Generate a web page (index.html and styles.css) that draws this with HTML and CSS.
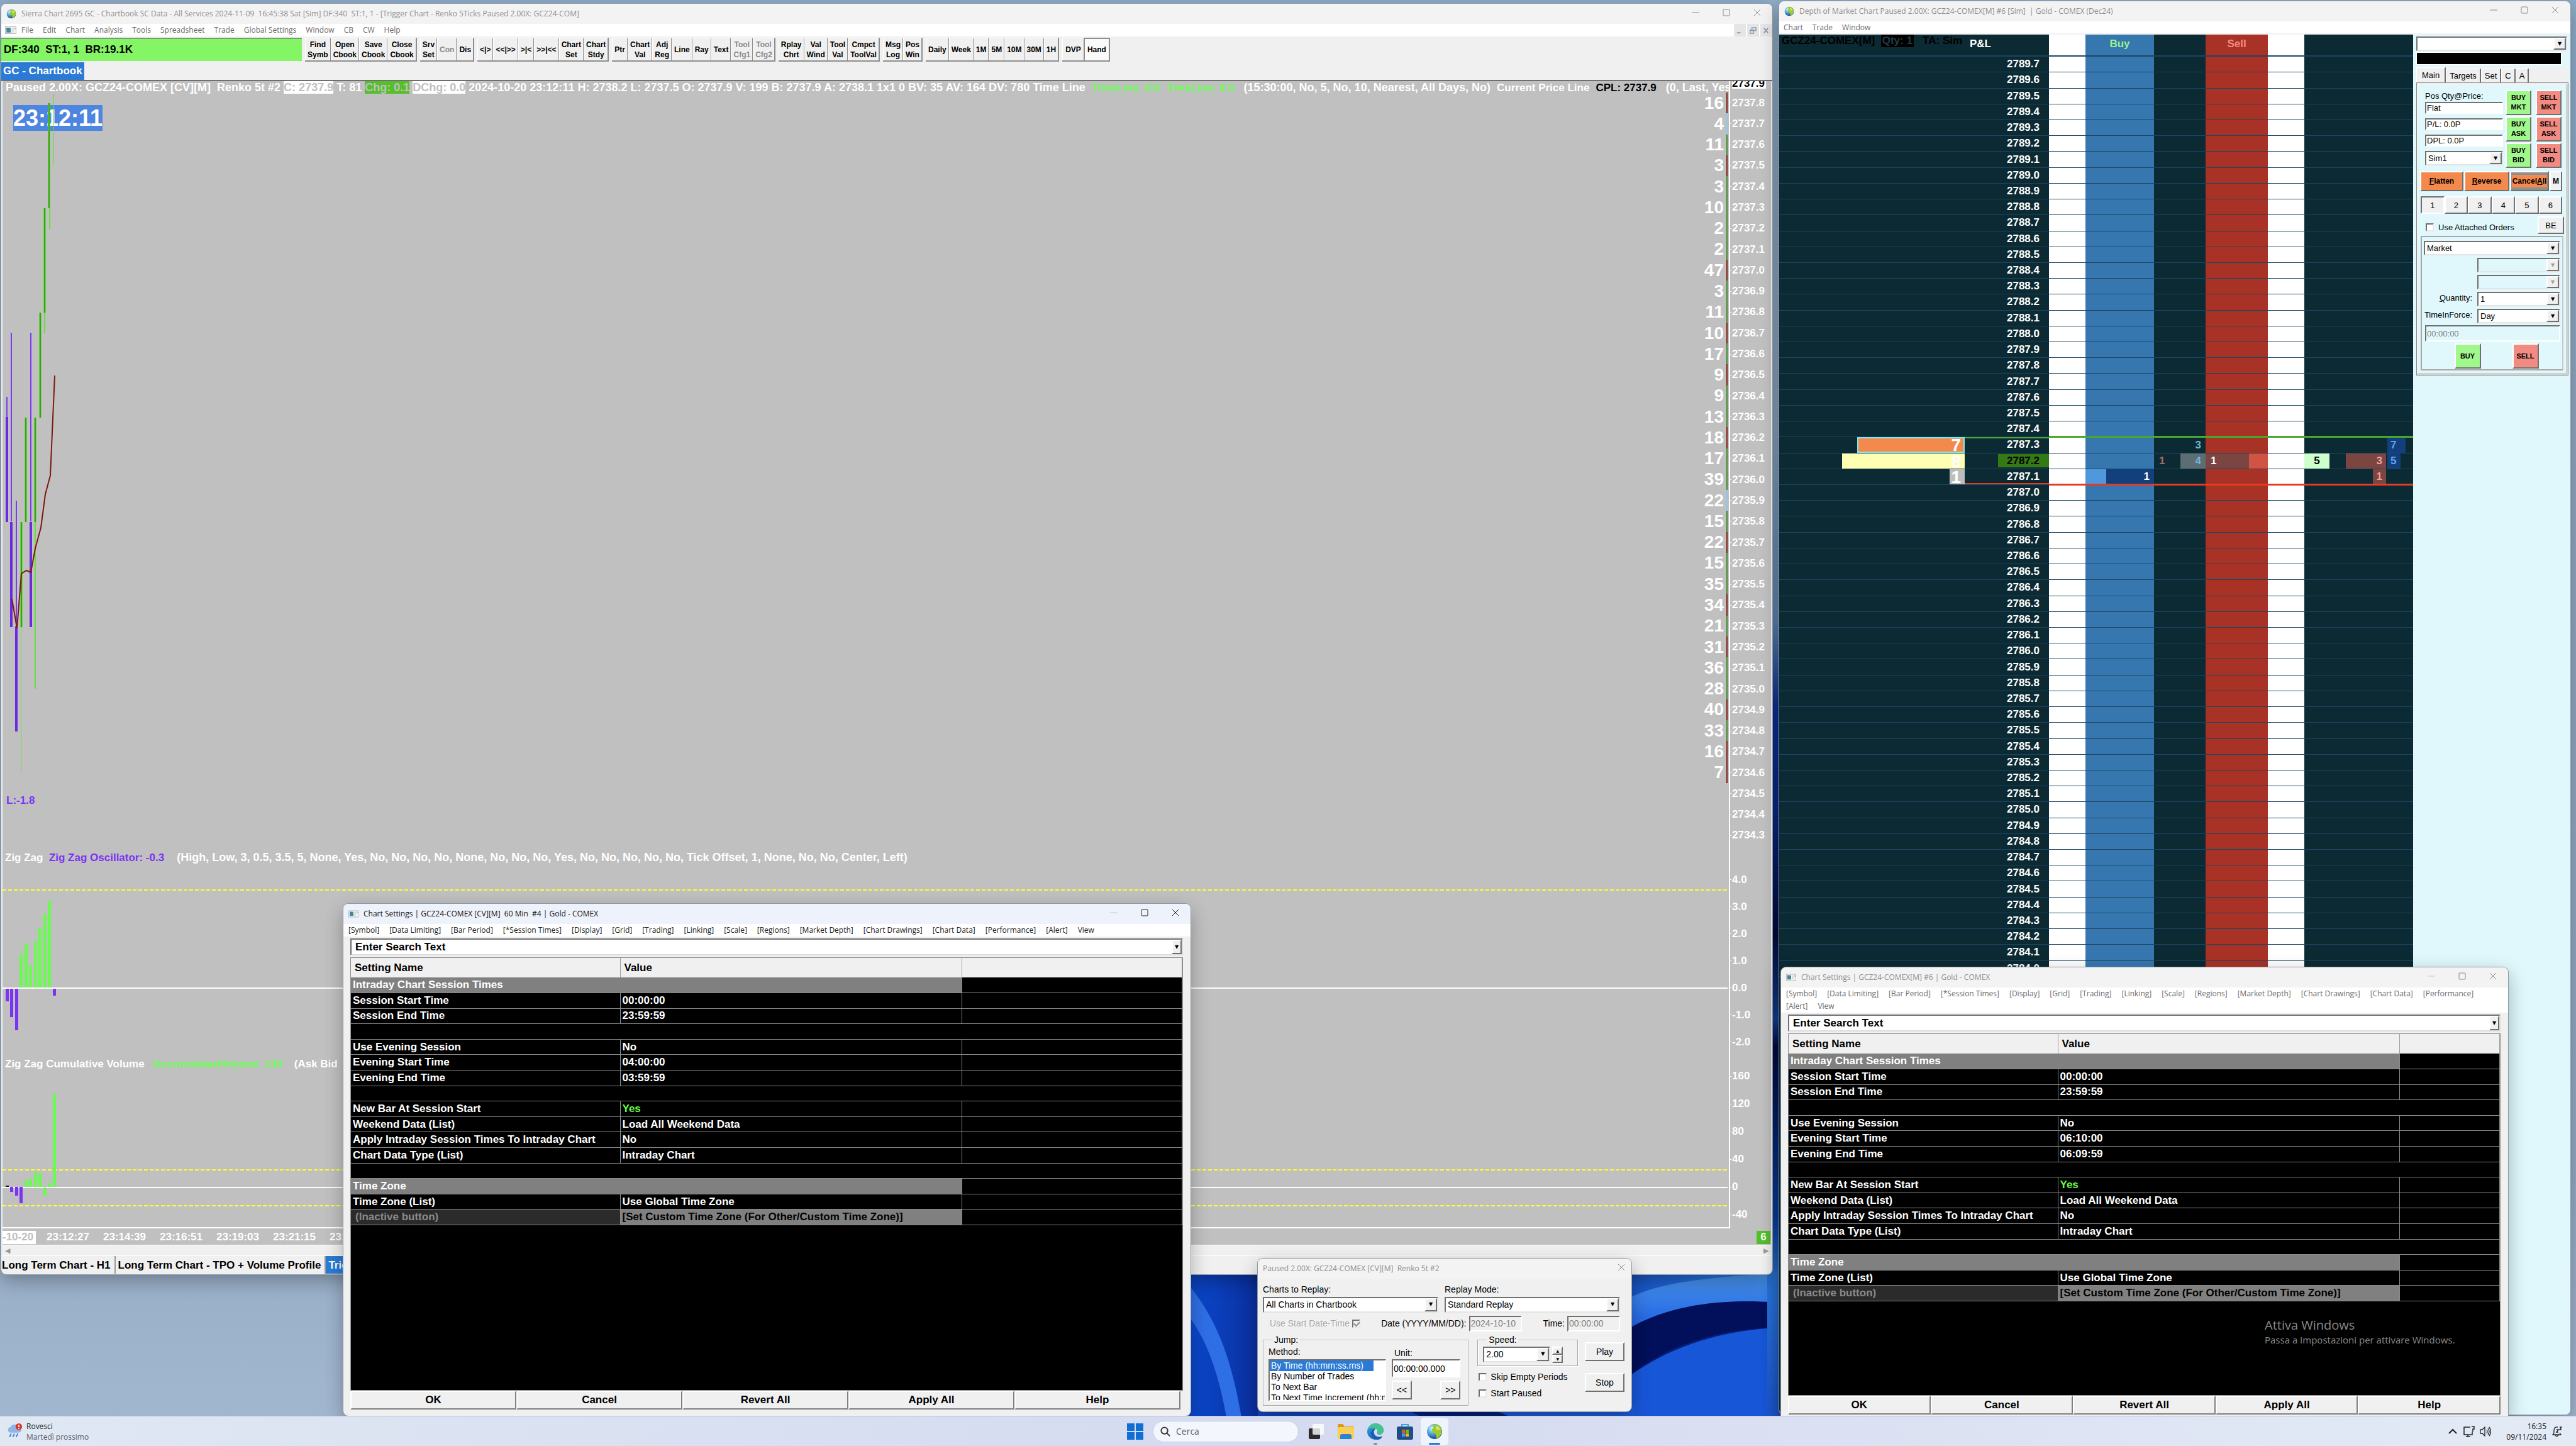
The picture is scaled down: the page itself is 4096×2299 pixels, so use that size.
FILE: index.html
```html
<!DOCTYPE html>
<html lang="it">
<head>
<meta charset="utf-8">
<title>Sierra Chart</title>
<link rel="stylesheet" href="styles.css">
</head>
<body>
<svg class="defs" aria-hidden="true">
  <defs>
    <radialGradient id="sea" cx="35%" cy="30%" r="75%"><stop offset="0" stop-color="#e8f6ff"/><stop offset=".4" stop-color="#5fb0e8"/><stop offset="1" stop-color="#123c86"/></radialGradient>
    <linearGradient id="edgeg" x1="0" y1="0" x2="1" y2="1"><stop offset="0" stop-color="#2aa7e0"/><stop offset=".5" stop-color="#1b77c9"/><stop offset="1" stop-color="#0d4f9e"/></linearGradient>
    <symbol id="globe" viewBox="0 0 24 24">
      <circle cx="12" cy="12" r="11" fill="url(#sea)"/>
      <path d="M9 3c4-2 9-1 12 3 2 4 2 8 0 11-2 3-4 5-6 5-1-3 0-5-2-7-3-1-5-2-5-5 0-2 2-3 3-4-1-1-2-2-2-3z" fill="#9ccc2e"/>
      <path d="M14 4c3 0 5 2 6 5l-3 1-3-2z" fill="#d7ea5a"/>
    </symbol>
    <symbol id="sheet" viewBox="0 0 24 16">
      <rect x=".5" y=".5" width="23" height="15" fill="#f4f4f4" stroke="#9aa0a6"/>
      <rect x="3" y="3" width="9" height="10" fill="#3f8f86"/><rect x="3" y="3" width="5" height="5" fill="#4d74b8"/>
      <rect x="14" y="3" width="4" height="10" fill="#d9dcdf"/><rect x="20" y="3" width="2" height="3" fill="#7fb58a"/>
    </symbol>
    <symbol id="min" viewBox="0 0 12 12"><path d="M0 6h12" stroke="currentColor" fill="none"/></symbol>
    <symbol id="max" viewBox="0 0 12 12"><rect x="1" y="1" width="10" height="10" rx="1" stroke="currentColor" fill="none"/></symbol>
    <symbol id="close" viewBox="0 0 12 12"><path d="M1 1l10 10M11 1L1 11" stroke="currentColor" fill="none"/></symbol>
  </defs>
</svg>

<main class="desktop">
  <svg class="bloom" viewBox="0 0 940 230" preserveAspectRatio="none" aria-hidden="true">
    <defs>
      <linearGradient id="b1" x1="0" x2="1"><stop offset="0" stop-color="#0b49cf"/><stop offset="1" stop-color="#0a2f9e"/></linearGradient>
      <linearGradient id="b2" x1="0" x2="0" y1="0" y2="1"><stop offset="0" stop-color="#4a95ec"/><stop offset="1" stop-color="#1a5be0"/></linearGradient>
      <linearGradient id="b3" x1="0" x2="1"><stop offset="0" stop-color="#0b329e"/><stop offset=".3" stop-color="#1550c4"/><stop offset="1" stop-color="#2f80e0"/></linearGradient>
    </defs>
    <rect width="940" height="230" fill="#04207c"/>
    <path d="M0 0h110v230H0z" fill="url(#b1)"/>
    <path d="M0 20C50 80 70 150 84 230H60C46 150 24 100 0 70z" fill="#2f6fe6"/>
    <path d="M560 0h380v60C860 40 760 40 702 60z" fill="url(#b3)"/>
    <path d="M702 40C760 10 860 8 940 0v60c-80-4-170 2-238 40z" fill="url(#b2)"/>
    <path d="M702 88c70-40 158-46 238-40v40c-80 0-170 20-238 76z" fill="#020f5a"/>
    <path d="M702 164c68-50 158-74 238-76v142H702z" fill="#1856d8"/>
    <path d="M110 214h230l30 16H110z" fill="#1246c0"/>
    <path d="M450 214c30 4 50 8 60 16h200v-16z" fill="#1b5bdc"/>
  </svg>
  <div class="gutter"></div>

  <!-- Main application window -->
  <section class="window app">
    <header class="titlebar">
      <svg class="ic16"><use href="#globe"/></svg>
      <h1>Sierra Chart 2695 GC - Chartbook SC Data - All Services 2024-11-09&nbsp; 16:45:38 Sat [Sim] DF:340&nbsp; ST:1, 1 - [Trigger Chart - Renko 5Ticks Paused 2.00X: GCZ24-COM]</h1>
      <div class="controls">
        <button aria-label="Minimize"><svg><use href="#min"/></svg></button>
        <button aria-label="Maximize"><svg><use href="#max"/></svg></button>
        <button aria-label="Close"><svg><use href="#close"/></svg></button>
      </div>
    </header>
    <nav class="menubar">
      <svg class="ic16 doc"><use href="#sheet"/></svg>
      <a href="#">File</a><a href="#">Edit</a><a href="#">Chart</a><a href="#">Analysis</a><a href="#">Tools</a><a href="#">Spreadsheet</a><a href="#">Trade</a><a href="#">Global Settings</a><a href="#">Window</a><a href="#">CB</a><a href="#">CW</a><a href="#">Help</a>
      <div class="mdi">
        <button aria-label="Minimize chart"><svg viewBox="0 0 12 12"><path d="M1 10h6" stroke="currentColor" stroke-width="2"/></svg></button>
        <button aria-label="Restore chart"><svg viewBox="0 0 12 12"><path d="M4 4V1h7v5H8M1 5h6v6H1zM1 6h6" stroke="currentColor" stroke-width="1.5" fill="none"/></svg></button>
        <button aria-label="Close chart"><svg viewBox="0 0 12 12"><path d="M2 2l7 8M9 2l-7 8" stroke="currentColor" stroke-width="2"/></svg></button>
      </div>
    </nav>
    <div class="toolbar">
      <div class="status">DF:340&nbsp; ST:1, 1&nbsp; BR:19.1K</div>
      <div class="tools"><button>Find<br>Symb</button><button>Open<br>Cbook</button><button>Save<br>Cbook</button><button>Close<br>Cbook</button></div>
      <div class="tools"><button>Srv<br>Set</button><button disabled>Con</button><button>Dis</button></div>
      <div class="tools"><button>&lt;|&gt;</button><button>&lt;&lt;|&gt;&gt;</button><button>&gt;|&lt;</button><button>&gt;&gt;|&lt;&lt;</button><button>Chart<br>Set</button><button>Chart<br>Stdy</button></div>
      <div class="tools"><button>Ptr</button><button>Chart<br>Val</button><button>Adj<br>Reg</button><button>Line</button><button>Ray</button><button>Text</button><button disabled>Tool<br>Cfg1</button><button disabled>Tool<br>Cfg2</button></div>
      <div class="tools"><button>Rplay<br>Chrt</button><button>Val<br>Wind</button><button>Tool<br>Val</button><button>Cmpct<br>ToolVal</button></div>
      <div class="tools"><button>Msg<br>Log</button><button>Pos<br>Win</button></div>
      <div class="tools"><button>Daily</button><button>Week</button><button>1M</button><button>5M</button><button>10M</button><button>30M</button><button>1H</button></div>
      <div class="tools roomy"><button>DVP</button><button class="pressed">Hand</button></div>
    </div>
    <div class="books"><button class="book">GC - Chartbook</button></div>

    <div class="chart">
      <div class="plot">
        <p class="legend">Paused 2.00X: GCZ24-COMEX [CV][M]  Renko 5t #2 <span class="inv">C: 2737.9</span> T: 81 <span class="inv up">Chg: 0.1</span> <span class="inv">DChg: 0.0</span> 2024-10-20 23:12:11 H: 2738.2 L: 2737.5 O: 2737.9 V: 199 B: 2737.9 A: 2738.1 1x1 0 BV: 35 AV: 164 DV: 780 Time Line  <span class="lime">TimeLine: 0.0</span>  <span class="lime">TimeLine: 0.0</span>   (15:30:00, No, 5, No, 10, Nearest, All Days, No)  <span class="name">Current Price Line</span>  <span class="blk">CPL: 2737.9</span>   (0, Last, Yes</p>
        <ol class="counts" id="counts"></ol>
        <p class="clock">23:12:11</p>
        <p class="study low">L:-1.8</p>
        <p class="study osc">Zig Zag  <span class="violet">Zig Zag Oscillator: -0.3</span><span class="inputs">    (High, Low, 3, 0.5, 3.5, 5, None, Yes, No, No, No, No, None, No, No, No, Yes, No, No, No, No, No, Tick Offset, 1, None, No, No, Center, Left)</span></p>
        <p class="study cum">Zig Zag Cumulative Volume   <span class="lime">AccumulatedVolume: 134</span>    (Ask Bid</p>
        <svg class="drawing" aria-hidden="true">
          <g transform="translate(-4 -129)">
            <g stroke="#ffff33" stroke-width="2" stroke-dasharray="6 3">
              <path d="M4 1415H2748M4 1860H2748M4 1917H2748"/>
            </g>
            <path d="M4 1571H2747M4 1888H2747" stroke="#fff" stroke-width="2"/>
            <g fill="#7b33f5">
              <path d="M9 1572h5v20h-5zM16 1572h5v45h-5zM24 1572h5v66h-5zM84 1572h5v11h-5z"/>
              <path d="M16 1887h5v8h-5zM24 1887h5v14h-5zM31 1887h5v26h-5z"/>
            </g>
            <path d="M9 1885h5v2h-5z" fill="#111"/>
            <path fill="#6bfa52" d="M31 1570h5v-53h-5zM39 1570h5v-70h-5zM46 1570h5v-35h-5zM54 1570h5v-74h-5zM61 1570h5v-95h-5zM69 1570h5v-117h-5zM76 1570h5v-138h-5zM39 1887h5v-11h-5zM46 1887h5v-13h-5zM54 1887h5v-24h-5zM61 1887h5v-21h-5zM69 1888h5v13h-5zM76 1887h5v-6h-5zM84 1887h5v-148h-5z"/>
            <g fill="#7b3cf0">
              <path d="M10 631h2v40h-2zM17 529h2v300h-2zM25 796h2v200h-2zM48 529h2v300h-2z"/>
              <path d="M9 663h4v167H9zM16 830h4v167h-4zM24 996h4v167h-4zM47 830h4v167h-4z" fill="#6a2be0"/>
            </g>
            <g fill="#68dd3f">
              <path d="M33 990h1v239h-1zM55 830h2v265h-2zM70 496h2v33h-2zM78 330h2v34h-2zM85 149h1v115h-1z"/>
              <path d="M32 830h4v167h-4zM39 664h4v166h-4zM54 664h4v166h-4zM62 497h4v167h-4zM69 331h4v166h-4zM76 164h4v167h-4z"/>
              <path d="M33 830h2v167h-2zM40 664h2v166h-2zM55 664h2v166h-2zM63 497h2v167h-2zM70 331h2v166h-2zM77 164h2v167h-2z" fill="#3f9a24"/>
            </g>
            <path d="M19 952L27 999L34 912L42 907L49 910L56 872L65 839L72 786L80 756L87 597" fill="none" stroke="#7d190f" stroke-width="2"/>
          </g>
        </svg>
      </div>
      <div class="axis">
        <div class="last">2737.9</div>
        <ol class="scale prices" id="prices"></ol>
        <ol class="scale oscs"><li>4.0</li><li>3.0</li><li>2.0</li><li>1.0</li><li>0.0</li><li>-1.0</li><li>-2.0</li></ol>
        <ol class="scale vols"><li>160</li><li>120</li><li>80</li><li>40</li><li>0</li><li>-40</li></ol>
      </div>
      <div class="times">
        <span class="day">-10-20</span>
        <ol><li>23:12:27</li><li>23:14:39</li><li>23:16:51</li><li>23:19:03</li><li>23:21:15</li><li>23:23:27</li></ol>
        <span class="badge">6</span>
      </div>
    </div>
    <div class="hscroll"><span>◀</span><span>▶</span></div>
    <nav class="charttabs"><a href="#">Long Term Chart - H1</a><a href="#">Long Term Chart - TPO + Volume Profile</a><a href="#" class="on">Trigger Chart - Renko 5Ticks</a></nav>
  </section>

  <!-- Depth of market window -->
  <section class="window dom">
    <header class="titlebar">
      <svg class="ic16"><use href="#globe"/></svg>
      <h1>Depth of Market Chart Paused 2.00X: GCZ24-COMEX[M] #6 [Sim]&nbsp; | Gold - COMEX (Dec24)</h1>
      <div class="controls">
        <button aria-label="Minimize"><svg><use href="#min"/></svg></button>
        <button aria-label="Maximize"><svg><use href="#max"/></svg></button>
        <button aria-label="Close"><svg><use href="#close"/></svg></button>
      </div>
    </header>
    <nav class="menubar"><a href="#">Chart</a><a href="#">Trade</a><a href="#">Window</a></nav>
    <div class="dombody">
      <div class="ladderwrap">
        <p class="symbol">GCZ24-COMEX[M]  <span>Qty: 1</span>   TA: Sim</p>
        <table class="ladder">
          <colgroup><col class="c-price"><col class="c-white"><col class="c-buy"><col class="c-mid"><col class="c-sell"><col class="c-white"><col></colgroup>
          <thead><tr><th class="pl">P&amp;L</th><th></th><th class="buy">Buy</th><th></th><th class="sell">Sell</th><th></th><th></th></tr></thead>
          <tbody id="ladder"></tbody>
        </table>
      </div>
      <form class="panel">
        <div class="combo wide"><select aria-label="Symbol"><option></option></select></div>
        <div class="blackbar"></div>
        <div class="ptabs"><button type="button" class="on">Main</button><button type="button">Targets</button><button type="button">Set</button><button type="button">C</button><button type="button">A</button></div>
        <div class="page">
          <div class="quick">
            <div class="pos">
              <label for="pos">Pos Qty@Price:</label>
              <input id="pos" value="Flat">
              <input aria-label="Profit loss" value="P/L: 0.0P">
              <input aria-label="Daily profit loss" value="DPL: 0.0P">
              <div class="combo"><select aria-label="Account"><option>Sim1</option></select></div>
            </div>
            <div class="trade"><button type="button" class="g">BUY<br>MKT</button><button type="button" class="r">SELL<br>MKT</button><button type="button" class="g">BUY<br>ASK</button><button type="button" class="r">SELL<br>ASK</button><button type="button" class="g">BUY<br>BID</button><button type="button" class="r">SELL<br>BID</button></div>
          </div>
          <div class="acts"><button type="button" class="o"><u>F</u>latten</button><button type="button" class="o"><u>R</u>everse</button><button type="button" class="cancel"><span>Cancel<u>A</u>ll</span></button><button type="button" class="m">M</button></div>
          <div class="nums"><button type="button" class="on">1</button><button type="button">2</button><button type="button">3</button><button type="button">4</button><button type="button">5</button><button type="button">6</button></div>
          <div class="attach"><label><input type="checkbox">Use Attached Orders</label><button type="button">BE</button></div>
          <div class="order">
            <div class="combo span"><select aria-label="Order type"><option>Market</option></select></div>
            <i></i><div class="combo off"><select aria-label="Price 1" disabled><option></option></select></div>
            <i></i><div class="combo off"><select aria-label="Price 2" disabled><option></option></select></div>
            <label for="qty"><u>Q</u>uantity:</label><div class="combo"><select id="qty"><option>1</option></select></div>
            <label for="tif">TimeInForce:</label><div class="combo"><select id="tif"><option>Day</option></select></div>
            <input class="span dis" aria-label="Expiry time" value="00:00:00" disabled>
            <div class="span send"><button type="button" class="g">BUY</button><button type="button" class="r">SELL</button></div>
          </div>
        </div>
      </form>
    </div>
  </section>

  <!-- Chart settings #4 -->
  <section class="window settings first active">
    <header class="titlebar">
      <svg class="ic16 doc"><use href="#sheet"/></svg>
      <h1>Chart Settings | GCZ24-COMEX [CV][M]&nbsp; 60 Min&nbsp; #4 | Gold - COMEX</h1>
      <div class="controls">
        <button aria-label="Minimize" disabled><svg><use href="#min"/></svg></button>
        <button aria-label="Maximize"><svg><use href="#max"/></svg></button>
        <button aria-label="Close"><svg><use href="#close"/></svg></button>
      </div>
    </header>
    <nav class="menubar"><a href="#">[Symbol]</a><a href="#">[Data Limiting]</a><a href="#">[Bar Period]</a><a href="#">[*Session Times]</a><a href="#">[Display]</a><a href="#">[Grid]</a><a href="#">[Trading]</a><a href="#">[Linking]</a><a href="#">[Scale]</a><a href="#">[Regions]</a><a href="#">[Market Depth]</a><a href="#">[Chart Drawings]</a><a href="#">[Chart Data]</a><a href="#">[Performance]</a><a href="#">[Alert]</a><a href="#">View</a></nav>
    <div class="setbody">
      <div class="search"><input aria-label="Search settings" value="Enter Search Text"><button aria-label="Open list">▼</button></div>
      <div class="sheet">
        <table class="props">
          <colgroup><col class="p1"><col class="p2"><col></colgroup>
          <thead><tr><th>Setting Name</th><th>Value</th><th></th></tr></thead>
          <tbody>
            <tr><td colspan="2" class="group">Intraday Chart Session Times</td><td></td></tr>
            <tr><td>Session Start Time</td><td>00:00:00</td><td></td></tr>
            <tr><td>Session End Time</td><td>23:59:59</td><td></td></tr>
            <tr><td colspan="3"></td></tr>
            <tr><td>Use Evening Session</td><td>No</td><td></td></tr>
            <tr><td>Evening Start Time</td><td>04:00:00</td><td></td></tr>
            <tr><td>Evening End Time</td><td>03:59:59</td><td></td></tr>
            <tr><td colspan="3"></td></tr>
            <tr><td>New Bar At Session Start</td><td class="yes">Yes</td><td></td></tr>
            <tr><td>Weekend Data (List)</td><td>Load All Weekend Data</td><td></td></tr>
            <tr><td>Apply Intraday Session Times To Intraday Chart</td><td>No</td><td></td></tr>
            <tr><td>Chart Data Type (List)</td><td>Intraday Chart</td><td></td></tr>
            <tr><td colspan="3"></td></tr>
            <tr><td colspan="2" class="group">Time Zone</td><td></td></tr>
            <tr><td>Time Zone (List)</td><td>Use Global Time Zone</td><td></td></tr>
            <tr><td class="inactive">(Inactive button)</td><td class="custom">[Set Custom Time Zone (For Other/Custom Time Zone)]</td><td></td></tr>
          </tbody>
        </table>
      </div>
      <div class="dlgbuttons"><button>OK</button><button>Cancel</button><button>Revert All</button><button>Apply All</button><button>Help</button></div>
    </div>
  </section>

  <!-- Chart settings #6 -->
  <section class="window settings second">
    <header class="titlebar">
      <svg class="ic16 doc"><use href="#sheet"/></svg>
      <h1>Chart Settings | GCZ24-COMEX[M] #6 | Gold - COMEX</h1>
      <div class="controls">
        <button aria-label="Minimize" disabled><svg><use href="#min"/></svg></button>
        <button aria-label="Maximize"><svg><use href="#max"/></svg></button>
        <button aria-label="Close"><svg><use href="#close"/></svg></button>
      </div>
    </header>
    <nav class="menubar"><a href="#">[Symbol]</a><a href="#">[Data Limiting]</a><a href="#">[Bar Period]</a><a href="#">[*Session Times]</a><a href="#">[Display]</a><a href="#">[Grid]</a><a href="#">[Trading]</a><a href="#">[Linking]</a><a href="#">[Scale]</a><a href="#">[Regions]</a><a href="#">[Market Depth]</a><a href="#">[Chart Drawings]</a><a href="#">[Chart Data]</a><a href="#">[Performance]</a><a href="#">[Alert]</a><a href="#">View</a></nav>
    <div class="setbody">
      <div class="search"><input aria-label="Search settings" value="Enter Search Text"><button aria-label="Open list">▼</button></div>
      <div class="sheet">
        <table class="props">
          <colgroup><col class="p1"><col class="p2"><col></colgroup>
          <thead><tr><th>Setting Name</th><th>Value</th><th></th></tr></thead>
          <tbody>
            <tr><td colspan="2" class="group">Intraday Chart Session Times</td><td></td></tr>
            <tr><td>Session Start Time</td><td>00:00:00</td><td></td></tr>
            <tr><td>Session End Time</td><td>23:59:59</td><td></td></tr>
            <tr><td colspan="3"></td></tr>
            <tr><td>Use Evening Session</td><td>No</td><td></td></tr>
            <tr><td>Evening Start Time</td><td>06:10:00</td><td></td></tr>
            <tr><td>Evening End Time</td><td>06:09:59</td><td></td></tr>
            <tr><td colspan="3"></td></tr>
            <tr><td>New Bar At Session Start</td><td class="yes">Yes</td><td></td></tr>
            <tr><td>Weekend Data (List)</td><td>Load All Weekend Data</td><td></td></tr>
            <tr><td>Apply Intraday Session Times To Intraday Chart</td><td>No</td><td></td></tr>
            <tr><td>Chart Data Type (List)</td><td>Intraday Chart</td><td></td></tr>
            <tr><td colspan="3"></td></tr>
            <tr><td colspan="2" class="group">Time Zone</td><td></td></tr>
            <tr><td>Time Zone (List)</td><td>Use Global Time Zone</td><td></td></tr>
            <tr><td class="inactive">(Inactive button)</td><td class="custom">[Set Custom Time Zone (For Other/Custom Time Zone)]</td><td></td></tr>
          </tbody>
        </table>
      </div>
      <div class="dlgbuttons"><button>OK</button><button>Cancel</button><button>Revert All</button><button>Apply All</button><button>Help</button></div>
    </div>
  </section>

  <!-- Replay control -->
  <section class="window replay">
    <header class="titlebar">
      <h1>Paused 2.00X: GCZ24-COMEX [CV][M]&nbsp; Renko 5t #2</h1>
      <div class="controls"><button aria-label="Close"><svg><use href="#close"/></svg></button></div>
    </header>
    <form class="rbody">
      <div class="pair">
        <div><label for="ctr">Charts to Replay:</label><div class="combo"><select id="ctr"><option>All Charts in Chartbook</option></select></div></div>
        <div><label for="rm">Replay Mode:</label><div class="combo"><select id="rm"><option>Standard Replay</option></select></div></div>
      </div>
      <div class="start">
        <label class="dim">Use Start Date-Time <input type="checkbox" checked disabled></label>
        <label class="date">Date (YYYY/MM/DD): <input value="2024-10-10" disabled></label>
        <label class="time">Time: <input value="00:00:00" disabled></label>
      </div>
      <div class="lower">
        <fieldset class="jump"><legend>Jump:</legend>
          <div class="method"><label for="method">Method:</label>
            <select id="method" size="4"><option selected>By Time (hh:mm:ss.ms)</option><option>By Number of Trades</option><option>To Next Bar</option><option>To Next Time Increment (hh:mm)</option></select></div>
          <div class="unit"><label for="unit">Unit:</label><input id="unit" value="00:00:00.000"><div class="step"><button type="button">&lt;&lt;</button><button type="button">&gt;&gt;</button></div></div>
        </fieldset>
        <div class="mid">
          <fieldset class="speed"><legend>Speed:</legend>
            <div class="combo"><select aria-label="Speed"><option>2.00</option></select></div>
            <div class="spin"><button type="button" aria-label="Faster">▲</button><button type="button" aria-label="Slower">▼</button></div>
          </fieldset>
          <label class="chk"><input type="checkbox">Skip Empty Periods</label>
          <label class="chk"><input type="checkbox">Start Paused</label>
        </div>
        <div class="run"><button type="button">Play</button><button type="button">Stop</button></div>
      </div>
    </form>
  </section>

  <div class="watermark"><p>Attiva Windows</p><p>Passa a Impostazioni per attivare Windows.</p></div>

  <footer class="taskbar">
    <div class="weather">
      <svg viewBox="0 0 30 30"><path d="M8 17a5 5 0 0 1 0-10 7 7 0 0 1 13-1 5.500 5.500 0 0 1 2 11z" fill="#8fb7e6"/><path d="M9 19l-3 6M15 19l-3 6M21 19l-3 6" stroke="#2f7bd8" stroke-width="2"/><circle cx="23" cy="6" r="6" fill="#d8372b"/><path d="M23 3v4M23 8v2" stroke="#fff" stroke-width="2"/></svg>
      <div><b>Rovesci</b><span>Martedì prossimo</span></div>
    </div>
    <div class="dock">
      <button class="app-ic" aria-label="Start"><svg viewBox="0 0 26 26"><path d="M0 0h12v12H0zM14 0h12v12H14zM0 14h12v12H0zM14 14h12v12H14z" fill="#0f6fd6"/></svg></button>
      <label class="find"><svg viewBox="0 0 18 18"><circle cx="8" cy="8" r="5.500" fill="none" stroke="#333" stroke-width="2"/><path d="M12 12l5 5" stroke="#333" stroke-width="2"/></svg><input placeholder="Cerca" aria-label="Cerca"></label>
      <button class="app-ic" aria-label="Task view"><svg viewBox="0 0 26 26"><rect x="1" y="8" width="18" height="17" rx="2" fill="#2b2b2b"/><rect x="7" y="1" width="18" height="17" rx="2" fill="#fff" fill-opacity=".8"/></svg></button>
      <button class="app-ic" aria-label="File explorer"><svg viewBox="0 0 26 26"><path d="M0 3a2 2 0 0 1 2-2h6l3 4h13a2 2 0 0 1 2 2v4H0z" fill="#d99a1c"/><rect y="6" width="26" height="19" rx="2" fill="#f9cf55"/><path d="M4 25v-5a3 3 0 0 1 3-3h12a3 3 0 0 1 3 3v5z" fill="#2b83d6"/></svg></button>
      <button class="app-ic edge" aria-label="Edge"><svg viewBox="0 0 26 26"><path d="M13 0c7 0 13 5 13 11 0 4-3 7-7 7-3 0-4-2-3-4 1-3-1-6-4-6-3 0-6 3-6 8 0 6 5 10 10 10C7 27 0 21 0 13 0 6 6 0 13 0z" fill="url(#edgeg)"/><path d="M1 10C3 4 8 0 13 0c7 0 13 5 13 11 0 4-3 7-7 7-3 0-4-2-3-4 1-4-2-7-6-7-4 0-7 1-9 3z" fill="#43c48c"/><path d="M12 8C8 9 5 13 6 18c1 5 5 8 10 8 4 0 7-2 8-6-5 3-12 1-13-4-1-3 0-5 2-7z" fill="#1560b4"/></svg></button>
      <button class="app-ic" aria-label="Store"><svg viewBox="0 0 26 26"><path d="M8 7V2h10v5" fill="none" stroke="#35a5e8" stroke-width="2"/><rect y="5" width="26" height="21" rx="3" fill="#1f4d86"/><path d="M8 10h5v5H8z" fill="#f25022"/><path d="M14 10h5v5h-5z" fill="#7fba00"/><path d="M8 16h5v5H8z" fill="#3aa0f0"/><path d="M14 16h5v5h-5z" fill="#ffb900"/></svg></button>
      <button class="app-ic running" aria-label="Sierra Chart"><svg><use href="#globe"/></svg></button>
    </div>
    <div class="tray">
      <svg viewBox="0 0 18 18"><path d="M3 12l6-6 6 6" fill="none" stroke="#222" stroke-width="2"/></svg>
      <svg viewBox="0 0 18 18"><path d="M11 2H1v12h13V9M4 17h7M7 14v3M13 1h4v4h-2v4" fill="none" stroke="#222" stroke-width="1.5"/></svg>
      <svg viewBox="0 0 18 18"><path d="M1 6h3l4-4v14l-4-4H1zM11 6q2 3 0 6M13 4q4 5 0 10M15 2q5 7 0 14" fill="none" stroke="#222" stroke-width="1.300"/></svg>
      <div class="when"><time>16:35</time><time>09/11/2024</time></div>
      <svg viewBox="0 0 18 18"><path d="M10 2C6 1 4 4 4 7v4l-2 3h13l-2-3M6 15q2 3 5 0M8 6h3L8 10h3M13 2h3l-3 4h3" fill="none" stroke="#222" stroke-width="1.300"/></svg>
    </div>
  </footer>
</main>
<script src="app.js"></script>
</body>
</html>
```
FILE: app.js
```js
// Price scale of the main chart and the numbers beside it
const prices = document.getElementById('prices');
for (let p = 27378; p >= 27343; p--) {
  const li = document.createElement('li');
  li.textContent = (p / 10).toFixed(1);
  prices.append(li);
}
const values = [16,4,11,3,3,10,2,2,47,3,11,10,17,9,9,13,18,17,39,22,15,22,15,35,34,21,31,36,28,40,33,16,7];
const tones = 'rbgrggggrggrgrggrggbgrggrgrggrgrr';
const counts = document.getElementById('counts');
values.forEach((v, i) => {
  const li = document.createElement('li');
  li.textContent = v;
  li.className = 'tone-' + tones[i];
  counts.append(li);
});

// Ladder rows; the marks hold position, depth and recent volume
const marks = {
  27873: { cls: 'top', price: '<b class="vol v7">7</b>', mid: '<b class="ask">3</b>', last: '<b class="rb b7">7</b>' },
  27872: { cls: 'now', price: '<b class="vol v8">8</b>', mid: '<b class="bid">1</b><b class="ask box">4</b>',
    sell: '<b class="s1">1</b><b class="s2"></b>', last: '<b class="five">5</b><b class="rr r3">3</b><b class="rb b5">5</b>' },
  27871: { cls: 'bottom', price: '<b class="vol v1">1</b>', buy: '<b class="q1"></b><b class="q2">1</b>', last: '<b class="rr r1">1</b>' }
};
const ladder = document.getElementById('ladder');
for (let p = 27897; p >= 27840; p--) {
  const m = marks[p] || {};
  const tr = document.createElement('tr');
  tr.className = m.cls || '';
  tr.innerHTML = `<td class="price">${m.price || ''}<span>${(p / 10).toFixed(1)}</span></td><td></td><td>${m.buy || ''}</td><td>${m.mid || ''}</td><td>${m.sell || ''}</td><td></td><td>${m.last || ''}</td>`;
  ladder.append(tr);
}
```
FILE: styles.css
```css
* { box-sizing: border-box; }
html, body { margin: 0; height: 100%; }
body { font: 14px/17px "Liberation Sans", Arial, sans-serif; color: #000; overflow: hidden; }
h1, p, ol { margin: 0; padding: 0; font-size: inherit; }
ol { list-style: none; }
button, input, select { font: inherit; color: inherit; margin: 0; border-radius: 0; }
button { padding: 0; border: 0; background: none; }
a { color: inherit; text-decoration: none; }
.defs { position: absolute; width: 0; height: 0; }

/* Desktop */
.desktop { position: relative; height: 100vh; overflow: hidden; background: linear-gradient(#8cabc8, #8ea6bf 40%, #93a9c4 80%, #a3b8d0); }
.bloom { position: absolute; right: 1266px; bottom: 46px; height: 230px; width: 940px; }
.gutter { position: absolute; right: 1264px; width: 22px; top: 0; bottom: 48px; background: linear-gradient(#93afc9, #8ba5bf 30%, #5f86b4 44%, #0b2f96 50%, #0a2a8a 57%, #020a3e 66%, #1746a8 72%, #020a4a 74%, #0a45b0 86%, #2a78dc 90%, #1b56d0); }
.window { position: absolute; display: flex; flex-direction: column; overflow: hidden; background: #f0f0f0; border-radius: 8px; box-shadow: 0 0 0 1px #8d99a5, 0 10px 30px rgba(0,0,0,.3); }
.titlebar { display: flex; align-items: center; flex: none; height: 32px; padding-left: 8px; background: #f3f3f3; color: #8f8f8f; font: 12px/16px "Open Sans", "Noto Sans", sans-serif; }
.titlebar h1 { flex: 1; font-weight: 400; white-space: nowrap; }
.ic16 { width: 16px; height: 16px; margin-right: 8px; flex: none; }
.controls { display: flex; }
.controls button { width: 49px; height: 30px; color: #8a8a8a; }
.controls svg { width: 12px; height: 12px; }
.controls button:disabled { color: #c9ccd1; }
.menubar { display: flex; flex: none; align-items: center; gap: 0 15px; height: 20px; background: #fff; color: #6a6a6a; font: 12px/20px "Open Sans", "Noto Sans", sans-serif; }

/* Main window */
.app { left: 2px; right: 1278px; top: 6px; bottom: 273px; }
.app .menubar { padding-left: 6px; }
.menubar .doc { margin-right: -7px; width: 18px; }
.mdi { display: flex; gap: 2px; margin-left: auto; align-self: stretch; }
.mdi button { width: 19px; background: #e5e5e5; color: #8497ab; line-height: 0; }
.mdi svg { width: 11px; height: 11px; }
.toolbar { display: flex; flex: none; height: 41px; gap: 5px; padding-top: 2px; font: bold 12px/16px "Liberation Sans", Arial, sans-serif; }
.status { width: 478px; height: 37px; padding-left: 4px; background: #84f564; border-top: 2px solid #7a9a72; font-size: 17px; line-height: 33px; }
.tools { display: flex; height: 38px; border-bottom: 2px solid #8d8d8d; border-right: 1px solid #8d8d8d; }
.tools button { padding: 0 3px; border-left: 1px solid #fff; border-right: 1px solid #8d8d8d; border-top: 1px solid #fff; }
.roomy button { padding: 0 4px; }
.tools button:disabled { color: #8a8a8a; }
.tools .pressed { background: #fafafa; border-left-color: #8d8d8d; border-top: 2px solid #8d8d8d; }
.books { flex: none; height: 30px; border-bottom: 2px solid #6f6f6f; }
.book { height: 28px; padding: 0 3px; background: #2b7bd6; color: #fff; font: bold 17px/28px "Liberation Sans", Arial, sans-serif; }
.chart { display: grid; flex: 1; grid-template: 1fr 26px / 1fr 67px; margin: 0 2px; background: #c0c0c0; color: #fff; font: bold 17px/20px "Liberation Sans", Arial, sans-serif; }
.plot { position: relative; min-width: 0; overflow: hidden; border-bottom: 2px solid #fff; display: flex; flex-direction: column; }
.legend { white-space: pre; height: 20px; padding-left: 5px; overflow: hidden; font-size: 18px; line-height: 20px; }
.legend .lime, .legend .name, .legend .blk { font-size: 17px; }
.inputs { font-size: 18px; }
.inv { display: inline-block; background: #fff; color: #c0c0c0; }
.inv.up { background: #55bf2c; }
.lime { color: #6cff55; }
.blk { color: #000; }
.violet { color: #7b33f5; }
.drawing { position: absolute; inset: 0; width: 100%; height: 100%; }
.counts { position: relative; display: flex; flex-direction: column; align-self: flex-end; height: 1098px; width: 60px; margin-top: -2px; font-size: 28px; text-align: right; z-index: 1; }
.counts li { flex: 1; display: flex; align-items: center; justify-content: flex-end; padding-right: 4px; margin-right: 2px; border-right: 2px solid #3f8a2c; }
.counts .tone-r { border-color: #7d2018; }
.counts .tone-b { border-color: #8cc8ef; }
.clock { position: absolute; left: 17px; top: 38px; background: #4d85e0; font-size: 36px; line-height: 41px; z-index: 0; }
.study { position: absolute; left: 4px; white-space: pre; }
.low { top: 1134px; left: 6px; color: #7b33f5; }
.osc { top: 1224px; }
.cum { top: 1553px; }
.axis { border-left: 2px solid #fff; display: flex; flex-direction: column; }
.last { height: 12px; margin: 0 8px 6px 3px; background: #fff; color: #000; line-height: 8px; overflow: hidden; }
.scale { display: flex; flex-direction: column; }
.scale li { flex: 1; display: flex; align-items: center; }
.scale li::before { content: ""; width: 2px; height: 1px; margin-right: 1px; background: #fff; }
.prices { height: 1198px; }
.oscs { height: 301px; margin: 32px 0 11px; }
.vols { height: 264px; }
.times { grid-column: 1 / 3; display: flex; align-items: center; padding-top: 2px; }
.day { width: 53px; height: 21px; background: #fff; color: #c0c0c0; }
.times ol { display: flex; flex: 1; margin-left: 6px; }
.times li { width: 90px; text-align: center; }
.badge { width: 22px; height: 21px; margin-right: 1px; background: #52bf2a; text-align: center; }
.hscroll { display: flex; justify-content: space-between; flex: none; height: 18px; padding: 0 6px; border-top: 1px solid #fff; border-bottom: 1px solid #fff; color: #9a9a9a; font-size: 11px; }
.charttabs { display: flex; flex: none; height: 30px; font: bold 17px/29px "Liberation Sans", Arial, sans-serif; }
.charttabs a { height: 28px; padding: 0 6px 0 4px; border-right: 2px solid #9a9a9a; }
.charttabs a:first-child { padding-left: 1px; }
.charttabs .on { background: #2b7bd6; color: #fff; }

/* Depth of market */
.dom { left: 2829px; right: 9px; top: 2px; bottom: 50px; }
.dom .menubar { padding-left: 7px; height: 19px; }
.dombody { display: flex; flex: 1; margin-top: 2px; background: #e0f8fb; }
.ladderwrap { position: relative; width: 1009px; background: #0c2a33; color: #fff; font: bold 17px/20px "Liberation Sans", Arial, sans-serif; }
.symbol { position: absolute; left: 4px; top: 0; white-space: pre; color: #000; z-index: 1; }
.symbol span { display: inline-block; padding: 0 2px; background: #000; color: #223c44; }
.ladder { width: 100%; height: 1498px; border-collapse: collapse; table-layout: fixed; }
.ladder th, .ladder td { padding: 0; border-bottom: 1px solid #1c4560; position: relative; font-weight: bold; }
.ladder th { height: 34px; border-bottom-width: 2px; padding-bottom: 4px; }
.c-price { width: 429px; }
.c-white { width: 58px; background: #fff; }
.c-buy { width: 109px; background: #3777b0; }
.c-mid { width: 82px; }
.c-sell { width: 99px; background: #a93226; }
.ladder .pl { text-align: right; padding-right: 92px; }
.buy { color: #98f58a; }
.sell { color: #f28b82; }
.price { text-align: right; }
.price span { padding: 1px 15px 1px 14px; }
.now .price span { background: #337a15; color: #000; }
.ladder b { position: absolute; top: 0; bottom: 0; line-height: 24px; text-align: right; padding-right: 7px; }
.ladder .vol { right: 134px; font-size: 28px; padding-right: 6px; line-height: 25px; }
.v7 { width: 171px; background: #f3894c; box-shadow: inset 0 0 0 2px #7fe8ea; }
.v8 { width: 195px; background: #ffffb3; }
.v1 { width: 24px; background: #bdbdbd; }
.ask { right: 0; color: #74b3d2; }
.ask.box { width: 40px; background: #5c6d73; }
.bid { left: 8px; color: #a07068; }
.ladder .s1 { left: 0; width: 70px; background: #7b4542; text-align: left; padding-left: 8px; }
.s2 { right: 0; width: 30px; background: #d05344; }
.q1 { left: 0; width: 33px; background: #5098dc; }
.q2 { right: 0; width: 76px; background: #12407c; }
.ladder .five { left: 0; width: 40px; background: #ccffcc; color: #000; text-align: center; padding: 0; }
.ladder .rr { right: 43px; background: #7b4542; color: #f0a0a0; padding-right: 6px; }
.r3 { width: 64px; }
.r1 { width: 21px; }
.ladder .rb { left: 132px; background: #12407c; color: #62a4f4; text-align: left; padding-left: 5px; }
.b7 { width: 29px; }
.b5 { width: 21px; }
.top td:not(.price) { border-top: 3px solid #4aa82f; }
.top .price { background: linear-gradient(#4aa82f, #4aa82f) right 0 top 0 / 134px 2px no-repeat; }
.bottom td:not(.price) { border-bottom: 3px solid #e63b20; }
.bottom .price { background: linear-gradient(#e63b20, #e63b20) right 0 bottom 0 / 134px 2px no-repeat; }

/* Classic controls */
.combo { position: relative; height: 23px; background: #fff; border: 2px solid; border-color: #707070 #e4e4e4 #e4e4e4 #707070; }
.combo select { width: 100%; height: 100%; padding: 0 3px; border: 0; background: transparent; appearance: none; outline: 0; display: block; }
.combo::after { content: "▼"; position: absolute; right: 0; top: 0; bottom: 0; width: 16px; background: #f0f0f0; border: 2px solid; border-color: #fff #707070 #707070 #fff; font: 8px/15px "DejaVu Sans", sans-serif; text-align: center; pointer-events: none; }
.combo.off { background: transparent; }
.combo.off::after { color: #a0a0a0; }
.panel button, .rbody button { background: #f0f0f0; border: 2px solid; border-color: #fff #707070 #707070 #fff; }
.panel input:not([type]), .rbody input:not([type]) { border: 2px solid; border-color: #707070 #fff #fff #707070; padding: 0 1px; background: #fff; min-width: 0; }
input[type=checkbox] { appearance: none; width: 13px; height: 13px; background: #fff; border: 2px solid; border-color: #707070 #e8e8e8 #e8e8e8 #707070; flex: none; }

/* Trade panel */
.panel { flex: 1; padding: 3px 3px 0 5px; font-size: 13px; line-height: 15px; }
.wide { margin-right: 2px; }
.blackbar { height: 20px; margin: 2px 11px 4px 0; background: #000; border: 1px solid #fff; }
.ptabs { display: flex; height: 24px; background: #f0f0f0; align-items: flex-end; }
.panel .ptabs button { height: 22px; padding: 0 5px; border-width: 1px 2px 0 1px; }
.panel .ptabs .on { height: 24px; padding: 0 8px; }
.page { height: 466px; padding: 8px 6px 0 8px; border: 4px solid #f0f0f0; border-right-color: #d0d0d0; border-bottom-color: #d0d0d0; border-left-width: 3px; outline: 1px solid #8a8a8a; outline-offset: -1px; }
.quick { display: flex; gap: 4px; margin-left: 3px; }
.pos { display: flex; flex-direction: column; width: 124px; gap: 7px; }
.pos label { margin-bottom: -7px; height: 19px; line-height: 20px; white-space: nowrap; }
.pos input { height: 19px; }
.trade { display: grid; grid-template-columns: 41px 41px; gap: 2px 7px; align-content: start; }
.trade button { height: 40px; }
.trade button, .send button { font-weight: bold; font-size: 11px; line-height: 15px; }
.panel .g { background: #a0f88c; }
.panel .r { background: #f28b82; }
.acts { display: grid; grid-template-columns: 69px 72px 62px 20px; gap: 1px; height: 32px; margin: 5px -3px 0 -5px; font-weight: bold; font-size: 12px; }
.panel .o { background: #f3894c; }
.panel .cancel { background: #8f8f8f; }
.cancel span { background: #f3894c; padding: 3px 1px; }
.nums { display: flex; height: 28px; margin: 8px 0 4px -4px; }
.nums button { flex: 1; }
.panel .nums .on { border-color: #707070 #fff #fff #707070; }
.attach { display: flex; align-items: center; justify-content: space-between; margin: 0 -3px 3px 4px; height: 28px; }
.attach label { display: flex; align-items: center; gap: 7px; padding-top: 7px; }
.attach button { width: 42px; height: 28px; }
.order { display: grid; grid-template-columns: 81px 132px; gap: 4px; height: 214px; align-content: start; margin: 0 -2px 0 -4px; padding: 6px 3px; border: 2px solid #a8a8a8; border-right-color: #c8c8c8; white-space: nowrap; }
.order label { text-align: right; line-height: 20px; padding-right: 4px; }
.order .span { grid-column: 1 / 3; }
.panel .order input.dis { height: 26px; margin: -1px 0 -1px 2px; background: transparent; color: #808080; }
.send { display: flex; justify-content: center; gap: 50px; margin-left: 14px; }
.send button { width: 42px; height: 40px; }

/* Settings dialogs */
.first { left: 546px; right: 2203px; top: 1437px; bottom: 48px; z-index: 3; }
.second { left: 2832px; right: 108px; top: 1538px; bottom: 48px; z-index: 3; border-radius: 8px 8px 0 0; }
.active .titlebar { background: #eef2fa; color: #111; }
.active .controls button:not(:disabled) { color: #222; }
.active .menubar { color: #1a1a1a; }
.settings .menubar { flex-wrap: wrap; gap: 0 16px; height: auto; padding: 0 16px 0 8px; }
.setbody { flex: 1; display: flex; flex-direction: column; padding: 3px 12px 2px 11px; font: bold 17px/20px "Liberation Sans", Arial, sans-serif; }
.first .setbody { padding-bottom: 10px; }
.first .dlgbuttons { padding-right: 4px; }
.search { display: flex; height: 27px; background: #fff; border: 2px solid; border-color: #707070 #ddd #ddd #707070; }
.search input { flex: 1; border: 0; padding: 0 6px; background: none; outline: 0; }
.search button { width: 16px; background: #f0f0f0; border: 2px solid; border-color: #fff #707070 #707070 #fff; font: 8px/8px "DejaVu Sans", sans-serif; }
.sheet { flex: 1; margin-top: 3px; background: #000; border: 1px solid #8a8a8a; color: #fff; }
.props { width: 100%; height: 425px; border-collapse: collapse; table-layout: fixed; line-height: 18px; }
.p1 { width: 428px; }
.p2 { width: 543px; }
.props th { height: 31px; padding: 0 6px; background: #f0f0f0; color: #000; text-align: left; border-right: 1px solid #a0a0a0; }
.props td { padding: 0 3px; height: 24px; border: 1px solid #8a8a8a; border-left: 0; border-top: 0; white-space: nowrap; overflow: hidden; }
.props .group { background: #808080; }
.props .yes { color: #66ff44; }
.props .inactive { background: #2b2b2b; color: #8a8a8a; padding-left: 7px; }
.props .custom { background: #808080; color: #000; }
.dlgbuttons { display: grid; grid-template-columns: repeat(5, 1fr); height: 30px; }
.dlgbuttons button { border: 2px solid; border-color: #fff #808080 #808080 #fff; }

/* Replay dialog */
.replay { left: 2000px; right: 1502px; top: 2001px; height: 243px; z-index: 4; }
.replay .controls button { width: 32px; }
.rbody { padding: 9px 18px 0 8px; }
.pair { display: grid; grid-template-columns: 1fr 1fr; gap: 10px; }
.pair label { display: block; height: 20px; }
.rbody .combo { height: 25px; }
.start { display: flex; align-items: center; height: 24px; margin-top: 5px; white-space: nowrap; }
.start label { display: flex; align-items: center; gap: 4px; }
.start .dim { margin-left: 11px; color: #a5a5a5; text-shadow: 1px 1px #fff; flex: 1; }
.start .dim input { background: #f0f0f0; line-height: 0; }
.start .dim input::before { content: ""; display: block; width: 7px; height: 4px; margin: 1px; border: solid #8a8a8a; border-width: 0 0 2px 2px; transform: rotate(-45deg); }
.start .time { margin-left: 34px; }
.rbody .start input:not([type]) { width: 84px; height: 25px; background: #f0f0f0; color: #808080; }
.lower { display: flex; margin: 6px -7px 0 0; }
fieldset { margin: 0; padding: 0; min-width: 0; border: 1px solid #a8a8a8; box-shadow: inset 1px 1px #fff, 1px 1px #fff; }
legend { padding: 0 2px; margin-left: 7px; }
.jump { display: flex; gap: 9px; width: 328px; height: 113px; padding: 3px 12px 0 8px; }
.method { width: 187px; }
.method label, .unit label { display: block; height: 19px; line-height: 14px; }
.unit { flex: 1; }
.unit label { padding-left: 4px; line-height: 18px; }
#method { display: block; width: 187px; height: 67px; border: 2px solid; border-color: #707070 #fff #fff #707070; background: #fff; padding: 0 18px 0 0; overflow: hidden; outline: 0; }
#method option { padding: 0 2px; min-height: 17px; height: 17px; line-height: 17px; }
#method option:checked { background: linear-gradient(#2b7bd6, #2b7bd6); color: #fff; -webkit-text-fill-color: #fff; }
.unit input { width: 100%; height: 29px; padding-bottom: 6px; }
.step { display: flex; justify-content: space-between; margin-top: 5px; }
.step button { width: 32px; height: 30px; }
.mid { width: 160px; margin-left: 14px; }
.speed { display: flex; gap: 3px; height: 50px; padding: 2px 8px; }
.speed .combo { width: 107px; }
.spin { display: flex; flex-direction: column; width: 17px; }
.rbody .spin button { height: 13px; font: 6px/7px "DejaVu Sans", sans-serif; }
.chk { display: flex; align-items: center; gap: 6px; margin: 9px 0 0 2px; }
.run { display: flex; flex-direction: column; gap: 19px; margin: 12px 0 0 11px; }
.run button { width: 63px; height: 30px; }

.watermark { position: absolute; right: 191px; bottom: 160px; width: 304px; z-index: 5; color: #8a8a8a; font: 15px/18px "Open Sans", "Noto Sans", sans-serif; white-space: nowrap; }
.watermark p:first-child { font-size: 20px; line-height: 28px; }

/* Taskbar */
.taskbar { position: absolute; left: 0; right: 0; bottom: 0; height: 48px; z-index: 6; display: grid; grid-template-columns: 1fr auto 1fr; align-items: center; background: linear-gradient(90deg, #dfe8f3, #d4daf0 50%, #dbe0f2 70%, #e3ebf6); border-top: 1px solid #b9c4d8; font: 12px/17px "Open Sans", "Noto Sans", sans-serif; color: #222; }
.weather { display: flex; align-items: center; gap: 6px; padding-left: 10px; }
.weather svg { width: 26px; height: 28px; }
.weather b, .weather span { display: block; font-weight: 400; }
.weather span { color: #5b626c; }
.dock { display: flex; align-items: center; gap: 3px; padding-right: 10px; }
.app-ic { width: 44px; height: 44px; line-height: 0; }
.app-ic svg { width: 26px; height: 26px; }
.find { display: flex; align-items: center; gap: 7px; width: 232px; height: 34px; margin: 0 3px; padding-left: 10px; background: #f3f6fc; border: 1px solid #c5cee0; border-radius: 17px; }
.find svg { width: 17px; height: 17px; }
.find input { width: 150px; border: 0; background: none; font-size: 14px; }
.find input::placeholder { color: #5c5c5c; opacity: 1; }
.running { position: relative; background: #eff3fb; border-radius: 5px; }
.running::after { content: ""; position: absolute; left: 13px; bottom: 1px; width: 18px; height: 3px; border-radius: 2px; background: #2b7bd6; }
.edge { position: relative; }
.edge::after { content: ""; position: absolute; left: 19px; bottom: 1px; width: 6px; height: 3px; border-radius: 2px; background: #8a8f99; }
.tray { display: flex; align-items: center; justify-content: flex-end; gap: 8px; padding-right: 21px; }
.tray svg { width: 18px; height: 18px; }
.when { margin-left: 16px; text-align: right; }
.when time { display: block; }
```
